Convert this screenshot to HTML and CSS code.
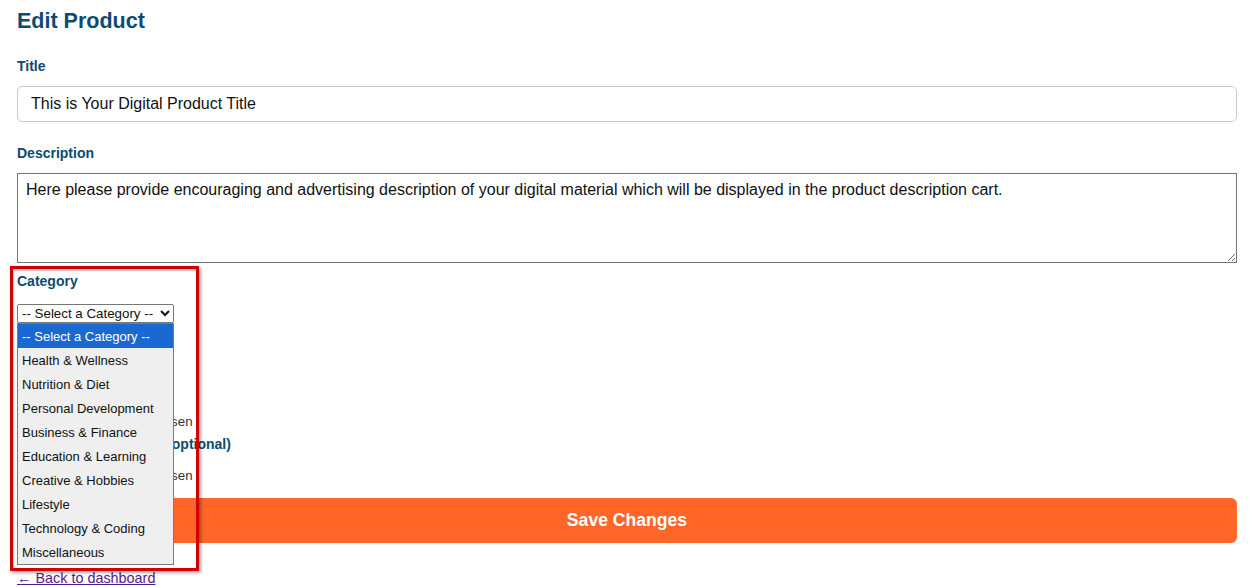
FILE: index.html
```html
<!DOCTYPE html>
<html lang="en">
<head>
<meta charset="utf-8">
<title>Edit Product</title>
<link rel="stylesheet" href="styles.css">
</head>
<body>
<div class="page">
  <h2 class="page-title">Edit Product</h2>
  <form class="form">
    <div class="field field-title">
      <label class="label" for="title">Title</label>
      <input class="text-input" id="title" type="text" value="This is Your Digital Product Title">
    </div>
    <div class="field field-desc">
      <label class="label" for="desc">Description</label>
      <textarea class="textarea" id="desc">Here please provide encouraging and advertising description of your digital material which will be displayed in the product description cart.</textarea>
    </div>
    <div class="field field-category">
      <label class="label" for="cat">Category</label>
      <select class="select" id="cat">
        <option>-- Select a Category --</option>
        <option>Health &amp; Wellness</option>
        <option>Nutrition &amp; Diet</option>
        <option>Personal Development</option>
        <option>Business &amp; Finance</option>
        <option>Education &amp; Learning</option>
        <option>Creative &amp; Hobbies</option>
        <option>Lifestyle</option>
        <option>Technology &amp; Coding</option>
        <option>Miscellaneous</option>
      </select>
      <ul class="popup">
        <li class="opt opt-selected">-- Select a Category --</li>
        <li class="opt">Health &amp; Wellness</li>
        <li class="opt">Nutrition &amp; Diet</li>
        <li class="opt">Personal Development</li>
        <li class="opt">Business &amp; Finance</li>
        <li class="opt">Education &amp; Learning</li>
        <li class="opt">Creative &amp; Hobbies</li>
        <li class="opt">Lifestyle</li>
        <li class="opt">Technology &amp; Coding</li>
        <li class="opt">Miscellaneous</li>
      </ul>
      <div class="highlight"></div>
    </div>
    <div class="field field-file1">
      <label class="label" for="thumb">Thumbnail Image</label>
      <input class="file-input" id="thumb" type="file">
    </div>
    <div class="field field-file2">
      <label class="label" for="pfile">Replace Product Files (optional)</label>
      <input class="file-input" id="pfile" type="file">
    </div>
    <button class="save-btn" type="button">Save Changes</button>
  </form>
  <a class="back-link" href="#">&larr; Back to dashboard</a>
</div>
</body>
</html>
```
FILE: styles.css
```css
html, body {
  margin: 0;
  padding: 0;
  background: #ffffff;
}

body {
  font-family: "Liberation Sans", Arial, sans-serif;
  color: #111111;
}

.page {
  padding: 9px 17px 0 17px;
}

.page-title {
  margin: 0;
  font-size: 21.5px;
  line-height: 25px;
  font-weight: bold;
  color: #0d4a70;
}

.form {
  display: flex;
  flex-direction: column;
  margin-top: 24px;
}

.field {
  display: flex;
  flex-direction: column;
  align-items: flex-start;
}

.label {
  display: block;
  font-size: 14px;
  line-height: 16px;
  font-weight: bold;
  color: #0d4a70;
  margin-bottom: 11px;
}

.field-title .label {
  margin-bottom: 12px;
}

.field-desc {
  margin-top: 23px;
}

.field-desc .label {
  margin-bottom: 12px;
}

.text-input {
  box-sizing: border-box;
  width: 100%;
  height: 36px;
  margin: 0;
  padding: 0 13px;
  border: 1px solid #cccccc;
  border-radius: 5px;
  font-family: "Liberation Sans", Arial, sans-serif;
  font-size: 16px;
  color: #111111;
  background: #ffffff;
}

.textarea {
  box-sizing: border-box;
  width: 100%;
  height: 90px;
  margin: 0;
  padding: 7px 8px;
  border: 1px solid #767676;
  font-family: "Liberation Sans", Arial, sans-serif;
  font-size: 16px;
  color: #111111;
  resize: vertical;
}

.field-category {
  position: relative;
  margin-top: 10px;
}

.field-category .label {
  margin-bottom: 15px;
}

.select {
  margin: 0;
  height: 19px;
  font-family: "Liberation Sans", Arial, sans-serif;
  font-size: 13.33px;
  color: #111111;
}

.popup {
  position: absolute;
  left: 0;
  top: 50px;
  z-index: 5;
  margin: 0;
  padding: 0;
  list-style: none;
  width: 155px;
  border: 1px solid #7b7b7b;
  background: #efefef;
}

.opt {
  height: 24px;
  line-height: 25px;
  padding-left: 4px;
  font-size: 13px;
  color: #111111;
  white-space: nowrap;
}

.opt-selected {
  background: #1a69d3;
  color: #ffffff;
}

.highlight {
  position: absolute;
  left: -7px;
  top: -7px;
  z-index: 6;
  width: 183px;
  height: 299px;
  border: 3px solid #d30000;
  box-shadow: 2px 2px 3px rgba(0, 0, 0, 0.35), inset 1px 2px 2px rgba(0, 0, 0, 0.25);
  pointer-events: none;
}

.field-file1 {
  margin-top: 59px;
}

.field-file1 .label,
.field-file2 .label {
  margin-bottom: 13px;
}

.field-file2 {
  margin-top: 4px;
}

.file-input {
  margin: 0;
  font-family: "Liberation Sans", Arial, sans-serif;
  font-size: 13.33px;
  color: #333333;
}

.save-btn {
  margin-top: 12px;
  width: 100%;
  height: 45px;
  border: none;
  border-radius: 6px;
  background: #ff6628;
  color: #ffffff;
  font-family: "Liberation Sans", Arial, sans-serif;
  font-size: 17.6px;
  font-weight: bold;
  cursor: pointer;
}

.back-link {
  display: inline-block;
  margin-top: 27px;
  font-size: 14.4px;
  line-height: 16px;
  color: #551a8b;
  text-decoration: underline;
}
```
